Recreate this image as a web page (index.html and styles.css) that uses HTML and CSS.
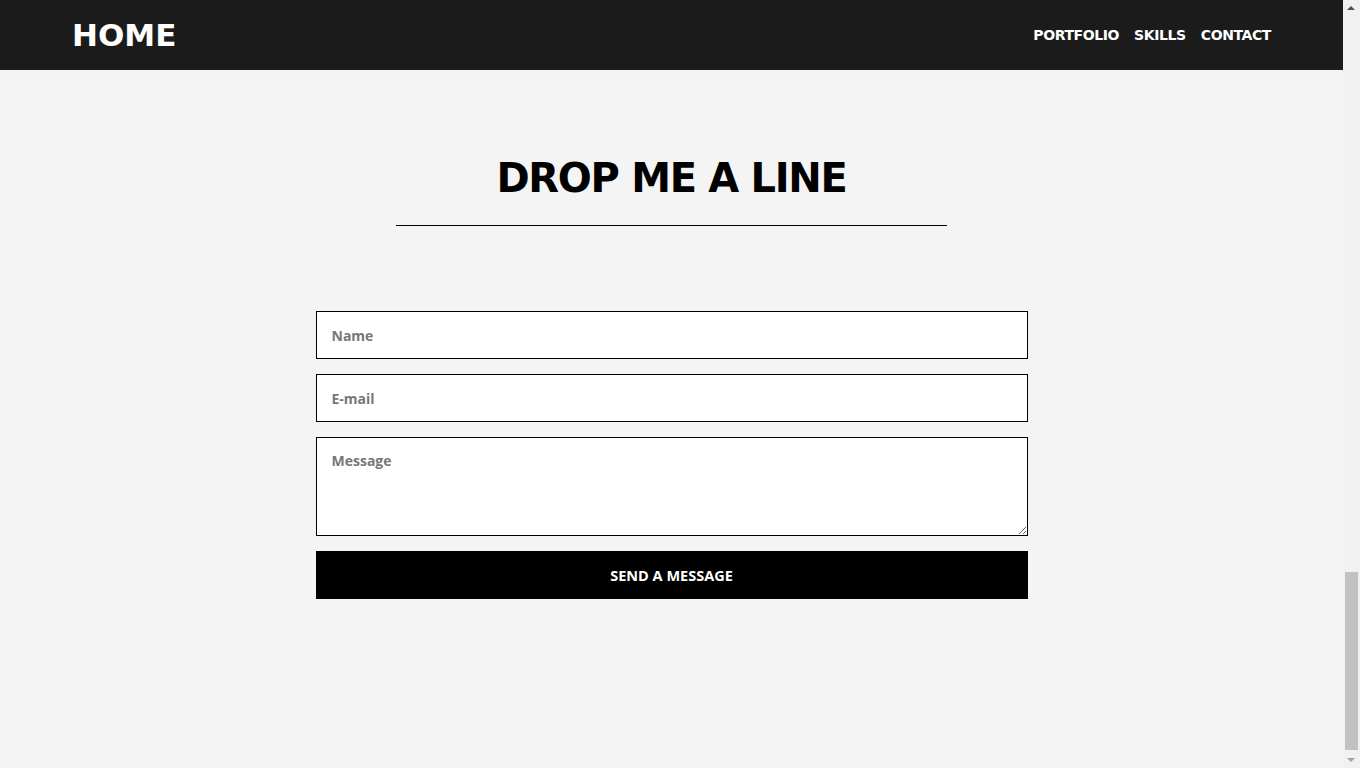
FILE: index.html
```html
<!DOCTYPE html>
<html lang="en">
<head>
    <meta charset="UTF-8">
    <meta name="viewport" content="width=device-width, initial-scale=1.0">
    <title>Contact</title>
    <link rel="stylesheet" href="styles.css">
</head>
<body>
    <header class="topbar">
        <a href="#" class="brand">HOME</a>
        <nav class="menu">
            <a href="#">PORTFOLIO</a>
            <a href="#">SKILLS</a>
            <a href="#">CONTACT</a>
        </nav>
    </header>

    <section class="contact">
        <h2 class="contact-title">DROP ME A LINE</h2>
        <hr class="contact-rule">

        <form class="contact-form">
            <input type="text" placeholder="Name">
            <input type="email" placeholder="E-mail">
            <textarea placeholder="Message"></textarea>
            <button type="submit">SEND A MESSAGE</button>
        </form>
    </section>

    <!-- window scrollbar, page scrolled to the bottom -->
    <div class="scrollbar">
        <span class="arrow up"></span>
        <span class="thumb"></span>
        <span class="arrow down"></span>
    </div>
</body>
</html>
```

FILE: styles.css
```css
html {
    overflow: hidden;
}
body {
    margin: 0;
    width: 1343px;
    background-color: #f4f4f4;
    font-family: "DejaVu Sans", sans-serif;
    color: #000;
    min-height: 768px;
}
a {
    color: inherit;
    text-decoration: none;
}
.topbar {
    height: 70px;
    background: #1b1b1c;
    color: #fff;
    display: flex;
    align-items: center;
    justify-content: space-between;
    padding: 0 72px;
}
.brand {
    font-size: 31px;
    font-weight: bold;
}
.menu {
    display: flex;
    gap: 15px;
    font-size: 14px;
    font-weight: bold;
    letter-spacing: -0.4px;
}
.contact {
    padding-top: 88px;
    display: flex;
    flex-direction: column;
    align-items: center;
}
.contact-title {
    margin: 0;
    font-size: 40px;
    line-height: 40px;
    font-weight: bold;
    letter-spacing: -1.3px;
}
.contact-rule {
    width: 551px;
    margin: 27px 0 0;
    border: none;
    border-top: 1px solid #000;
}
.contact-form {
    width: 712px;
    margin-top: 85px;
    display: flex;
    flex-direction: column;
    gap: 15px;
}
input, textarea, button {
    font-family: "Open Sans", sans-serif;
    font-weight: bold;
    font-size: 14px;
}
input, textarea {
    box-sizing: border-box;
    width: 100%;
    border: 1px solid #000;
    background: #fff;
    padding: 0 15px;
    margin: 0;
    outline: none;
}
input {
    height: 48px;
}
textarea {
    height: 99px;
    padding-top: 13px;
    resize: vertical;
}
::placeholder {
    color: #777;
}
button {
    height: 48px;
    border: none;
    background: #000;
    color: #fff;
    font-size: 14.5px;
    cursor: pointer;
}
.scrollbar {
    position: fixed;
    top: 0;
    right: 0;
    width: 17px;
    height: 768px;
    background: #f1f1f1;
}
.thumb {
    position: absolute;
    left: 2px;
    top: 572px;
    width: 13px;
    height: 178px;
    background: #c1c1c1;
}
.arrow {
    position: absolute;
    left: 4px;
    width: 0;
    height: 0;
    border-left: 4px solid transparent;
    border-right: 4px solid transparent;
}
.arrow.up {
    top: 6px;
    border-bottom: 4px solid #505050;
}
.arrow.down {
    bottom: 6px;
    border-top: 4px solid #a3a3a3;
}
```
